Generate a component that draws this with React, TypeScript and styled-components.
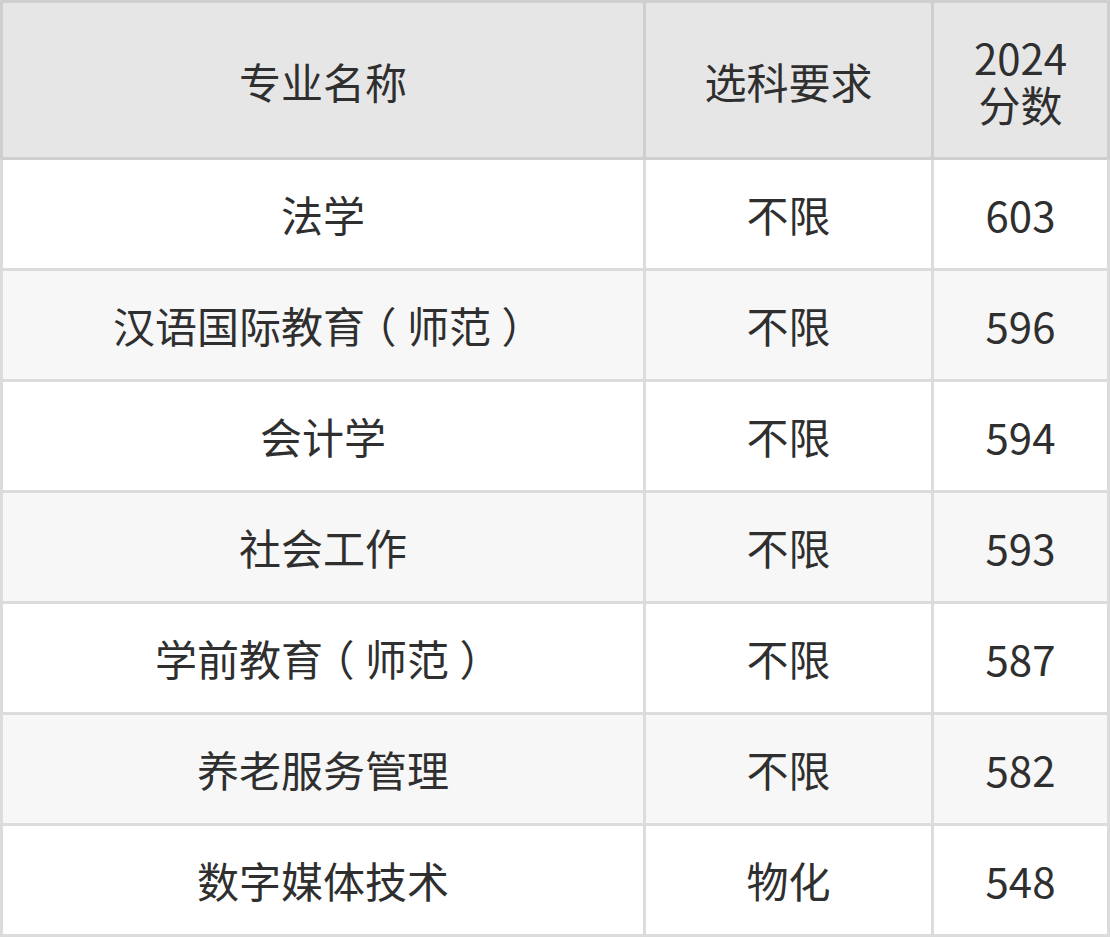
import React from 'react';
import styled, { createGlobalStyle } from 'styled-components';

const rows = [
  { name: '法学', req: '不限', score: '603' },
  { name: '汉语国际教育（师范）', req: '不限', score: '596' },
  { name: '会计学', req: '不限', score: '594' },
  { name: '社会工作', req: '不限', score: '593' },
  { name: '学前教育（师范）', req: '不限', score: '587' },
  { name: '养老服务管理', req: '不限', score: '582' },
  { name: '数字媒体技术', req: '物化', score: '548' },
];

// the reference font centres full-width brackets in their box
const renderName = (name: string) =>
  name.split(/([（）])/).map((part, i) =>
    part === '（' || part === '）' ? <Paren key={i}>{part}</Paren> : part,
  );

const App: React.FC = () => {
  return (
    <>
      <GlobalStyle />
      <Table>
        <colgroup>
          <col style={{ width: 643 }} />
          <col style={{ width: 288 }} />
          <col />
        </colgroup>
        <thead>
          <tr>
            <HeadCell>专业名称</HeadCell>
            <HeadCell>选科要求</HeadCell>
            <HeadCell>
              2024
              <br />
              分数
            </HeadCell>
          </tr>
        </thead>
        <tbody>
          {rows.map((r, i) => (
            <Row key={r.name} $striped={i % 2 === 1}>
              <Cell>{renderName(r.name)}</Cell>
              <Cell>{r.req}</Cell>
              <Cell>{r.score}</Cell>
            </Row>
          ))}
        </tbody>
      </Table>
    </>
  );
};

const GlobalStyle = createGlobalStyle`
  body {
    margin: 0;
    background: #fff;
    font-family: "Noto Sans CJK SC", "Noto Sans", sans-serif;
  }
`;

const Table = styled.table`
  width: 1110px;
  table-layout: fixed;
  border-collapse: collapse;
  border: 3px solid #dcdcdc;
  color: #2f2f2f;
  font-size: 42px;
`;

const HeadCell = styled.th`
  height: 154px;
  padding: 0;
  background: #e6e6e6;
  border: 3px solid #cfcfcf;
  font-weight: 400;
  line-height: 47px;
  text-align: center;
`;

const Row = styled.tr<{ $striped: boolean }>`
  background: ${(p) => (p.$striped ? '#f7f7f7' : '#fff')};
`;

const Cell = styled.td`
  height: 108px;
  padding: 0;
  border: 3px solid #dcdcdc;
  text-align: center;
  line-height: 1;
`;

const Paren = styled.span`
  display: inline-block;
  width: 1em;
  text-align: center;
  font-feature-settings: "halt";
`;

export default App;
